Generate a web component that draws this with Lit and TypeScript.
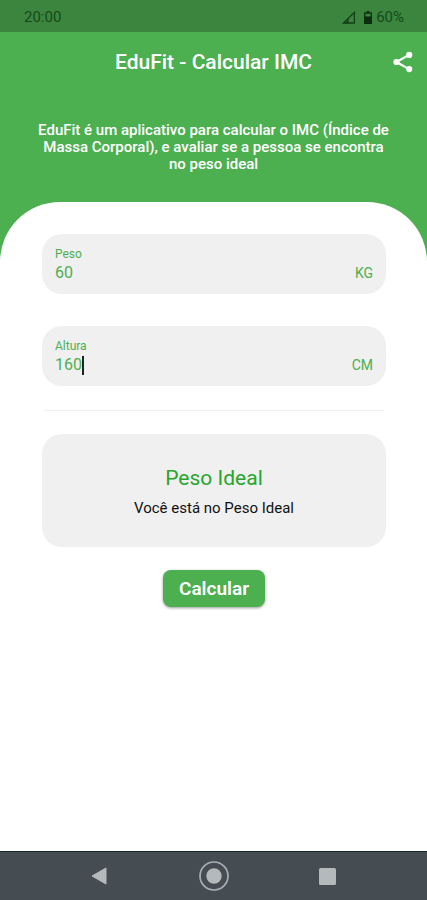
import { LitElement, html, css, nothing } from "lit";
import { customElement, property, state } from "lit/decorators.js";

@customElement("status-bar")
class StatusBar extends LitElement {
  static styles = css`
    :host {
      display: flex;
      align-items: center;
      justify-content: space-between;
      height: 32px;
      padding: 2px 23px 0 24px;
      box-sizing: border-box;
      background: #3b853e;
      color: #164a1a;
      font-size: 15px;
      line-height: 16px;
    }
    .indicators {
      display: flex;
      align-items: center;
    }
    .signal {
      margin-right: 8px;
    }
    .battery {
      margin-right: 4px;
    }
    svg {
      display: block;
    }
  `;

  render() {
    return html`
      <span>20:00</span>
      <div class="indicators">
        <svg class="signal" width="14" height="13" viewBox="0 0 14 13" aria-hidden="true">
          <path d="M1.6 12 12.4 1.4V12Z" fill="none" stroke="#143f17" stroke-width="1.3" />
          <path d="M1 12.5 7 6.8V12.5Z" fill="#143f17" opacity="0.7" />
        </svg>
        <svg class="battery" width="8" height="13" viewBox="0 0 8 13" aria-hidden="true">
          <path d="M2.5 0h3v1.5H8V13H0V1.5h2.5Z" fill="#0b2f0e" />
          <path d="M1.3 2.8h5.4v2.6h-5.4Z" fill="#3b853e" />
        </svg>
        <span>60%</span>
      </div>
    `;
  }
}

@customElement("measure-field")
class MeasureField extends LitElement {
  @property() label = "";
  @property() unit = "";
  @property() value = "";
  @property({ type: Boolean }) active = false;

  static styles = css`
    :host {
      display: block;
    }
    .field {
      display: flex;
      flex-direction: column;
      padding: 12px 13px 10px;
      border-radius: 20px;
      background: #f0f0f0;
      color: #4caf50;
      cursor: text;
    }
    .label {
      font-size: 12px;
      line-height: 16px;
    }
    .row {
      display: flex;
      align-items: center;
      height: 22px;
    }
    input {
      field-sizing: content;
      min-width: 8px;
      padding: 0;
      border: 0;
      outline: 0;
      background: none;
      color: inherit;
      font: inherit;
      font-size: 16px;
      line-height: 20px;
      caret-color: transparent;
    }
    .caret {
      width: 2px;
      height: 19px;
      background: #222;
    }
    .unit {
      margin-left: auto;
      font-size: 14px;
      line-height: 20px;
    }
  `;

  private onInput(e: Event) {
    this.value = (e.target as HTMLInputElement).value;
    this.dispatchEvent(new CustomEvent("value-change", { detail: this.value }));
  }

  render() {
    return html`
      <label class="field">
        <span class="label">${this.label}</span>
        <span class="row">
          <input inputmode="numeric" .value=${this.value} @input=${this.onInput} />
          ${this.active ? html`<span class="caret"></span>` : nothing}
          <span class="unit">${this.unit}</span>
        </span>
      </label>
    `;
  }
}

@customElement("nav-bar")
class NavBar extends LitElement {
  static styles = css`
    :host {
      display: grid;
      grid-template-columns: repeat(3, 114px);
      justify-content: center;
      height: 49px;
      box-sizing: border-box;
      border-top: 1px solid #14262e;
      background: #454d52;
    }
    button {
      display: grid;
      place-items: center;
      padding: 0;
      border: 0;
      background: none;
    }
  `;

  render() {
    return html`
      <button aria-label="Voltar">
        <svg width="18" height="18" viewBox="0 0 18 18">
          <path d="M1 9 15 1V17Z" fill="#b4babc" stroke="#b4babc" stroke-linejoin="round" />
        </svg>
      </button>
      <button aria-label="Início">
        <svg width="30" height="30" viewBox="0 0 30 30">
          <circle cx="15" cy="15" r="14" fill="none" stroke="#a9b0b2" stroke-width="1.7" />
          <circle cx="15" cy="15" r="7.7" fill="#b4babc" />
        </svg>
      </button>
      <button aria-label="Recentes">
        <svg width="17" height="17" viewBox="0 0 17 17">
          <rect width="17" height="17" rx="1.5" fill="#b4babc" />
        </svg>
      </button>
    `;
  }
}

@customElement("app-root")
class AppRoot extends LitElement {
  @state() private weight = "60";
  @state() private height = "160";
  @state() private result = { title: "Peso Ideal", text: "Você está no Peso Ideal" };

  static styles = css`
    :host {
      display: flex;
      flex-direction: column;
      min-height: 100vh;
      background: #4caf50;
      font-family: Roboto, "Liberation Sans", sans-serif;
    }
    .app-bar {
      display: grid;
      grid-template-columns: 48px 1fr 48px;
      align-items: center;
      height: 60px;
      color: #fff;
    }
    h1 {
      grid-column: 2;
      margin: 0;
      font-size: 21px;
      font-weight: 500;
      line-height: 24px;
      text-align: center;
    }
    .share {
      display: grid;
      place-items: center;
      height: 48px;
      padding: 0;
      border: 0;
      background: none;
      color: inherit;
    }
    .intro {
      margin: 0;
      padding: 30px 36px 29px;
      color: #fff;
      font-size: 15px;
      font-weight: 500;
      line-height: 17px;
      text-align: center;
    }
    .sheet {
      display: flex;
      flex: 1;
      flex-direction: column;
      padding: 32px 41px 32px 42px;
      border-radius: 60px 60px 0 0;
      background: #fff;
    }
    .fields {
      display: grid;
      gap: 32px;
    }
    hr {
      width: calc(100% - 4px);
      height: 1px;
      margin: 24px auto 23px;
      border: 0;
      background: #f0f0f0;
    }
    .result {
      display: flex;
      flex-direction: column;
      gap: 8px;
      padding: 32px 16px 29px;
      border-radius: 20px;
      background: #f0f0f0;
      text-align: center;
    }
    h2 {
      margin: 0;
      color: #28a52d;
      font-size: 21px;
      font-weight: 400;
      line-height: 24px;
    }
    .result p {
      margin: 0;
      color: #111;
      font-size: 15px;
      line-height: 20px;
    }
    .calc {
      align-self: center;
      height: 37px;
      margin-top: 23px;
      padding: 0 16px;
      border: 0;
      border-radius: 8px;
      background: #4caf50;
      box-shadow: 0 1px 3px rgba(0, 0, 0, 0.4);
      color: #fff;
      font: 600 19px/24px Roboto, "Liberation Sans", sans-serif;
    }
  `;

  private calculate() {
    const meters = Number(this.height) / 100;
    const bmi = Number(this.weight) / (meters * meters);
    if (bmi < 18.5) {
      this.result = { title: "Abaixo do Peso", text: "Você está abaixo do peso" };
    } else if (bmi < 25) {
      this.result = { title: "Peso Ideal", text: "Você está no Peso Ideal" };
    } else {
      this.result = { title: "Acima do Peso", text: "Você está acima do peso" };
    }
  }

  render() {
    return html`
      <status-bar></status-bar>
      <header class="app-bar">
        <h1>EduFit - Calcular IMC</h1>
        <button class="share" aria-label="Compartilhar">
          <svg width="24" height="24" viewBox="0 0 24 24" fill="currentColor">
            <path d="M18 4.9 5.5 12 18 19.1" fill="none" stroke="currentColor" stroke-width="2.2" />
            <circle cx="18.2" cy="4.9" r="3.1" />
            <circle cx="5.4" cy="12" r="3.1" />
            <circle cx="18.2" cy="19.1" r="3.1" />
          </svg>
        </button>
      </header>
      <p class="intro">
        EduFit é um aplicativo para calcular o IMC (Índice de Massa Corporal), e avaliar se a
        pessoa se encontra no peso ideal
      </p>
      <main class="sheet">
        <div class="fields">
          <measure-field
            label="Peso"
            unit="KG"
            .value=${this.weight}
            @value-change=${(e: CustomEvent) => (this.weight = e.detail)}
          ></measure-field>
          <measure-field
            label="Altura"
            unit="CM"
            active
            .value=${this.height}
            @value-change=${(e: CustomEvent) => (this.height = e.detail)}
          ></measure-field>
        </div>
        <hr />
        <section class="result" aria-live="polite">
          <h2>${this.result.title}</h2>
          <p>${this.result.text}</p>
        </section>
        <button class="calc" @click=${this.calculate}>Calcular</button>
      </main>
      <nav-bar></nav-bar>
    `;
  }
}
